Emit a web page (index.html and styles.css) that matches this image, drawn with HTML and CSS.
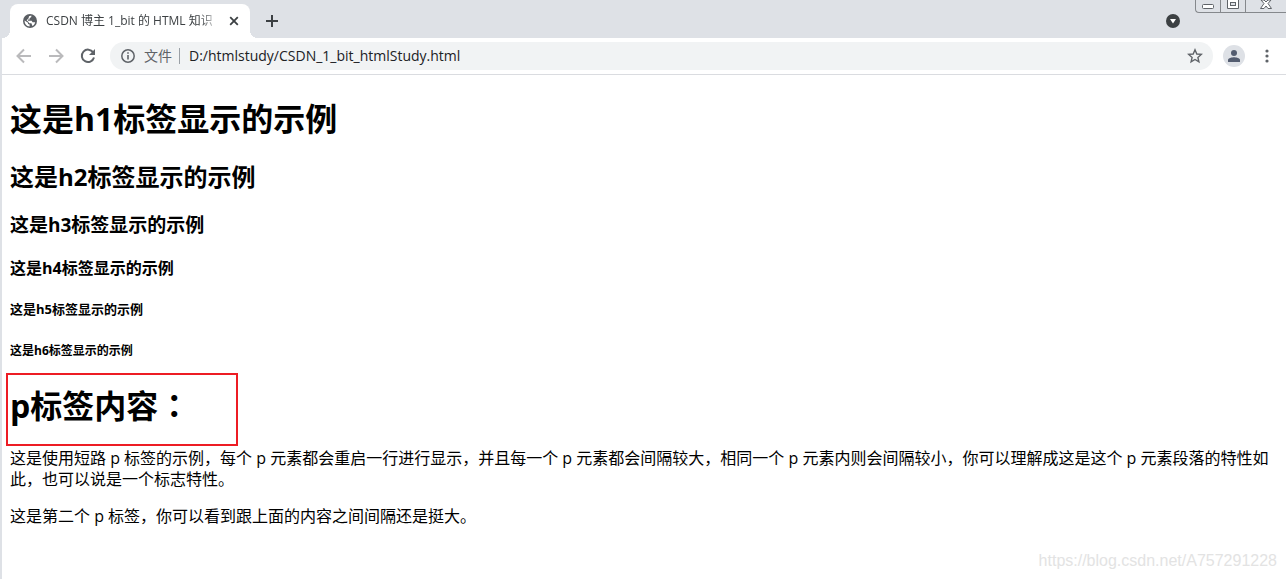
FILE: index.html
```html
<!DOCTYPE html>
<html lang="zh-CN">
<head>
<meta charset="utf-8">
<title>CSDN 博主 1_bit 的 HTML 知识</title>
<link rel="stylesheet" href="styles.css">
</head>
<body>
<div class="window">
  <header class="tabstrip">
    <div class="tab">
      <svg class="globe" width="14" height="14" viewBox="0 0 14 14"><circle cx="7" cy="7" r="7" fill="#5a5e63"/><path d="M1.600 6.500L5 8.800V10L6.600 10.600V12.400C3.800 12.300 1.500 10 1.600 6.500ZM8.300 1.500V3L6.600 4.300V5.600H5V6.800H8.600L9.600 8.200H12.200C11.600 10.400 10.600 11.500 9.400 12L8.400 9.200H6.300L5 7.600L3.600 6.200L5.600 4.200L6 2.200Z" fill="#fff"/></svg>
      <span class="tab-title">CSDN 博主 1_bit 的 HTML 知识</span>
      <button class="icon-btn tab-close" aria-label="关闭"><svg width="10" height="10" viewBox="0 0 10 10"><path d="M1.200 1.200L8.800 8.800M8.800 1.200L1.200 8.800" stroke="#3c4043" stroke-width="1.800"/></svg></button>
    </div>
    <button class="icon-btn new-tab" aria-label="新标签页"><svg width="12" height="12" viewBox="0 0 12 12"><path d="M6 0V12M0 6H12" stroke="#3c4043" stroke-width="2"/></svg></button>
    <button class="icon-btn tab-search" aria-label="搜索标签页"><svg width="14" height="14" viewBox="0 0 14 14"><circle cx="7" cy="7" r="7" fill="#3c4043"/><path d="M4 5H10L7 9.400Z" fill="#fff"/></svg></button>
    <div class="controls">
      <button class="control" aria-label="最小化"><svg width="12" height="12" viewBox="0 0 12 12"><rect x=".5" y="4.500" width="11" height="4" rx="1" fill="#fff" stroke="#5f6368"/></svg></button>
      <button class="control" aria-label="最大化"><svg width="12" height="12" viewBox="0 0 12 12"><path d="M.5 0V8.500H11.500V0" fill="#fff" stroke="#5f6368"/><rect x="3.500" y="2.500" width="5" height="3" fill="#dee1e6" stroke="#5f6368"/></svg></button>
      <button class="control control-close" aria-label="关闭窗口"><svg width="12" height="12" viewBox="0 0 12 12"><path d="M1 0L4 3.500L.5 8.500H4L6 6L8 8.500H11.500L8 3.500L11 0H8L6 2L4 0Z" fill="#fff" stroke="#5f6368"/></svg></button>
    </div>
  </header>
  <div class="frame">
    <nav class="toolbar">
      <button class="icon-btn" aria-label="后退"><svg width="16" height="16" viewBox="0 0 16 16"><path d="M15 8H2M8 1.500L1.500 8L8 14.500" fill="none" stroke="#bababc" stroke-width="2"/></svg></button>
      <button class="icon-btn" aria-label="前进"><svg width="16" height="16" viewBox="0 0 16 16"><path d="M1 8H14M8 1.500L14.500 8L8 14.500" fill="none" stroke="#bababc" stroke-width="2"/></svg></button>
      <button class="icon-btn" aria-label="重新加载"><svg width="16" height="16" viewBox="0 0 16 16"><path d="M13.200 4.400A6.200 6.200 0 1 0 14 9.500" fill="none" stroke="#5f6368" stroke-width="2"/><path d="M15 1V7H9Z" fill="#5f6368"/></svg></button>
      <div class="omnibox">
        <svg class="info" width="14" height="14" viewBox="0 0 14 14"><circle cx="7" cy="7" r="6.200" fill="none" stroke="#5f6368" stroke-width="1.500"/><path d="M7 3.200V4.800M7 6V10.600" stroke="#5f6368" stroke-width="1.600"/></svg>
        <label class="scheme" for="address">文件</label>
        <input class="address" id="address" type="text" value="D:/htmlstudy/CSDN_1_bit_htmlStudy.html">
        <button class="icon-btn" aria-label="收藏"><svg width="16" height="16" viewBox="0 0 16 16"><path d="M8 1.800L9.800 6L14.300 6.400L10.900 9.400L11.900 13.900L8 11.500L4.100 13.900L5.100 9.400L1.700 6.400L6.200 6Z" fill="none" stroke="#5f6368" stroke-width="1.400"/></svg></button>
      </div>
      <button class="icon-btn avatar" aria-label="用户"><svg width="14" height="14" viewBox="0 0 14 14"><circle cx="7" cy="4" r="3" fill="#545d70"/><path d="M1 13V11C1 9 5 8.200 7 8.200S13 9 13 11V13Z" fill="#545d70"/></svg></button>
      <button class="icon-btn" aria-label="菜单"><svg width="4" height="14" viewBox="0 0 4 14"><g fill="#5f6368"><circle cx="2" cy="2" r="1.600"/><circle cx="2" cy="7" r="1.600"/><circle cx="2" cy="12" r="1.600"/></g></svg></button>
    </nav>
    <main class="page">
      <h1 class="h1">这是h1标签显示的示例</h1>
      <h2 class="h2">这是h2标签显示的示例</h2>
      <h3 class="h3">这是h3标签显示的示例</h3>
      <h4 class="h4">这是h4标签显示的示例</h4>
      <h5 class="h5">这是h5标签显示的示例</h5>
      <h6 class="h6">这是h6标签显示的示例</h6>
      <h1 class="h1 marked">p标签内容<span class="colon" lang="zh-TW">：</span></h1>
      <p class="para">这是使用短路 p 标签的示例，每个 p 元素都会重启一行进行显示，并且每一个 p 元素都会间隔较大，相同一个 p 元素内则会间隔较小，你可以理解成这是这个 p 元素段落的特性如此，也可以说是一个标志特性。</p>
      <p class="para">这是第二个 p 标签，你可以看到跟上面的内容之间间隔还是挺大。</p>
    </main>
  </div>
  <div class="watermark">https://blog.csdn.net/A757291228</div>
</div>
</body>
</html>
```
FILE: styles.css
```css
*, *::before, *::after { box-sizing: border-box; }

body {
  margin: 0;
  background: #fff;
  color: #000;
  font-family: "Open Sans", "Noto Sans CJK SC", sans-serif;
}

.window {
  position: relative;
  display: flex;
  flex-direction: column;
  min-height: 100vh;
}

.icon-btn {
  display: flex;
  align-items: center;
  justify-content: center;
  flex: none;
  width: 16px;
  height: 16px;
  padding: 0;
  border: 0;
  background: none;
}

.icon-btn svg, .control svg { display: block; flex: none; }

.tabstrip {
  display: flex;
  align-items: flex-start;
  height: 38px;
  padding-left: 10px;
  background: #dee1e6;
}

.tab {
  position: relative;
  display: flex;
  align-items: center;
  width: 240px;
  height: 34px;
  margin-top: 4px;
  padding: 0 8px 0 13px;
  border-radius: 8px 8px 0 0;
  background: #fff;
}

.tab::before, .tab::after {
  content: "";
  position: absolute;
  bottom: 0;
  width: 8px;
  height: 8px;
}

.tab::before {
  right: 100%;
  background: radial-gradient(circle at 0 0, #dee1e6 8px, #fff 8px);
}

.tab::after {
  left: 100%;
  background: radial-gradient(circle at 100% 0, #dee1e6 8px, #fff 8px);
}

.globe { flex: none; }

.tab-title {
  flex: 1;
  min-width: 0;
  margin-left: 9px;
  overflow: hidden;
  white-space: nowrap;
  font-size: 12px;
  line-height: 18px;
  color: #3c4043;
  mask-image: linear-gradient(to right, #000 88%, transparent 100%);
}

.tab-close { margin-left: 6px; }

.new-tab { margin: 13px 0 0 14px; }

.tab-search { margin: 13px 14px 0 auto; }

.controls {
  display: flex;
  height: 13px;
  border: 1px solid #85888c;
  border-width: 0 0 1px 1px;
  border-radius: 0 0 0 4px;
}

.control {
  display: flex;
  justify-content: center;
  width: 25px;
  padding: 0;
  border: 0;
  border-right: 1px solid #85888c;
  background: none;
}

.control-close {
  width: 40px;
  border-right: 0;
}

.frame {
  flex: 1;
  border-left: 2px solid #dee1e6;
}

.toolbar {
  display: flex;
  align-items: center;
  gap: 16px;
  height: 37px;
  padding: 0 11px 0 14px;
  border-bottom: 1px solid #dadce0;
}

.omnibox {
  display: flex;
  flex: 1;
  align-items: center;
  height: 28px;
  margin: 0 -6px 0 -2px;
  padding: 0 10px 0 11px;
  border-radius: 14px;
  background: #f1f3f4;
}

.scheme {
  margin: 0 9px 0 9px;
  padding-right: 7px;
  border-right: 1px solid #9aa0a6;
  font-size: 14px;
  line-height: 16px;
  color: #5f6368;
}

.address {
  flex: 1;
  min-width: 0;
  padding: 0;
  border: 0;
  outline: 0;
  background: none;
  font-family: inherit;
  font-size: 14px;
  line-height: 20px;
  color: #202124;
}

.avatar {
  width: 22px;
  height: 22px;
  border-radius: 50%;
  background: #dee1e6;
}

.toolbar > .icon-btn:last-child { margin-left: -2px; }

.page { padding: 22px 8px 8px; }

.h1, .h2, .h3, .h4, .h5, .h6 { font-weight: 700; }

.h1 { margin: 0 0 21px; font-size: 32px; line-height: 43px; }
.h2 { margin: 0 0 20px; font-size: 24px; line-height: 32px; }
.h3 { margin: 0 0 20px; font-size: 19px; line-height: 25px; }
.h4 { margin: 0 0 22px; font-size: 16px; line-height: 21px; }
.h5 { margin: 0 0 25px; font-size: 13px; line-height: 17px; }
.h6 { margin: 0 0 25px; font-size: 12px; line-height: 15px; }

.marked { position: relative; }

.marked::after {
  content: "";
  position: absolute;
  top: -10px;
  left: -4px;
  width: 232px;
  height: 73px;
  border: 2px solid #ed1c24;
}

.colon { font-family: "Noto Sans CJK TC", sans-serif; }

.para {
  margin: 0 0 16px;
  font-size: 16px;
  line-height: 21px;
}

.watermark {
  position: absolute;
  right: 9px;
  bottom: 8px;
  font-family: "Liberation Sans", sans-serif;
  font-size: 16px;
  line-height: 20px;
  color: #e3e3e3;
}
```
